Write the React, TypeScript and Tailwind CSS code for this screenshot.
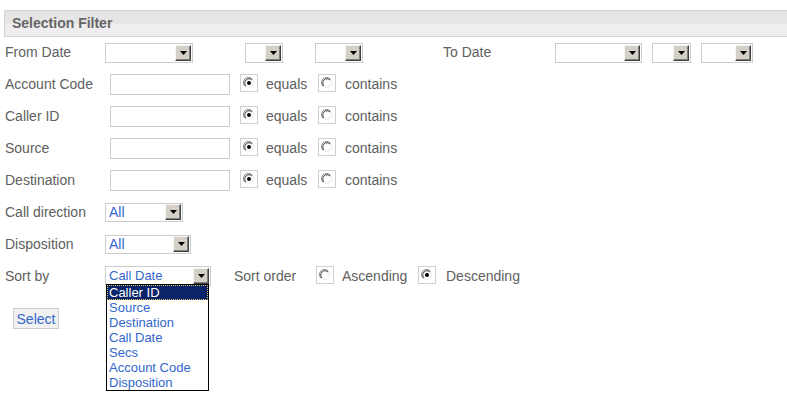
import React from 'react';

const Arrow = () => (
  <div className="ml-auto mr-px flex h-[16px] w-[16px] shrink-0 items-center justify-center border border-t-[#f4f4f4] border-l-[#f4f4f4] border-r-[#404040] border-b-[#404040] bg-[#d4d0c8] shadow-[inset_-1px_-1px_0_#808080]">
    <svg width="7" height="4" viewBox="0 0 7 4">
      <path d="M0 0h7L3.5 4z" fill="#000" />
    </svg>
  </div>
);

const Radio = ({ checked }: { checked?: boolean }) => (
  <span className="flex h-[18px] w-[18px] shrink-0 items-center justify-center border border-[#d0d0d0] bg-white">
    <svg width="12" height="12" viewBox="0 0 12 12">
      <path d="M9.5 2.5A5 5 0 1 0 2.5 9.5" fill="none" stroke="#808080" strokeWidth="1" />
      <path d="M9 3A4 4 0 1 0 3 9" fill="none" stroke="#404040" strokeWidth="1" />
      <path d="M2.5 9.5A5 5 0 0 0 9.5 2.5" fill="none" stroke="#e8e8e8" strokeWidth="1" />
      {checked && <circle cx="6" cy="6" r="2" fill="#000" />}
    </svg>
  </span>
);

const textRows = ['Account Code', 'Caller ID', 'Source', 'Destination'];
const sortOptions = ['Caller ID', 'Source', 'Destination', 'Call Date', 'Secs', 'Account Code', 'Disposition'];

export default function App() {
  return (
    <div className="h-[399px] w-[787px] bg-white pt-[10px] text-[14px] text-[#606060] font-['Liberation_Sans',Arial,sans-serif]">
      <div className="ml-[4px] flex h-[27px] items-center border-y border-l border-[#d2d2d2] bg-[linear-gradient(#e5e5e5_50%,#efedef_50%)] pl-[7px] font-bold text-[#666]">
        Selection Filter
      </div>

      <div className="pl-[5px]">
        {/* From / To date */}
        <div className="flex h-[31px] items-center">
          <span className="w-[100px]">From Date</span>
          <div className="flex h-[20px] w-[88px] items-center border border-[#cccccc] bg-white"><Arrow /></div>
          <div className="ml-[52px] flex h-[20px] w-[38px] items-center border border-[#cccccc] bg-white"><Arrow /></div>
          <div className="ml-[32px] flex h-[20px] w-[48px] items-center border border-[#cccccc] bg-white"><Arrow /></div>
          <span className="ml-[80px] w-[112px]">To Date</span>
          <div className="flex h-[20px] w-[87px] items-center border border-[#cccccc] bg-white"><Arrow /></div>
          <div className="ml-[10px] flex h-[20px] w-[39px] items-center border border-[#cccccc] bg-white"><Arrow /></div>
          <div className="ml-[10px] flex h-[20px] w-[52px] items-center border border-[#cccccc] bg-white"><Arrow /></div>
        </div>

        {textRows.map((label) => (
          <div key={label} className="flex h-[32px] items-center">
            <span className="w-[105px]">{label}</span>
            <div className="h-[21px] w-[120px] border border-[#cccccc] bg-white" />
            <span className="ml-[10px] -mt-[3px]"><Radio checked /></span>
            <span className="ml-[8px] w-[52px]">equals</span>
            <span className="-mt-[3px]"><Radio /></span>
            <span className="ml-[9px]">contains</span>
          </div>
        ))}

        <div className="flex h-[32px] items-center">
          <span className="w-[100px]">Call direction</span>
          <div className="flex h-[19px] w-[78px] items-center border border-[#cccccc] bg-white pl-[3px] text-[#3366cc]">
            All<Arrow />
          </div>
        </div>

        <div className="flex h-[32px] items-center">
          <span className="w-[100px]">Disposition</span>
          <div className="flex h-[19px] w-[86px] items-center border border-[#cccccc] bg-white pl-[3px] text-[#3366cc]">
            All<Arrow />
          </div>
        </div>

        <div className="flex h-[32px] items-center">
          <span className="w-[100px]">Sort by</span>
          <div className="relative flex h-[20px] w-[106px] items-center border border-[#cccccc] bg-white pl-[3px] text-[13px] text-[#3366cc]">
            Call Date<Arrow />
            <div className="absolute left-0 top-[17px] z-10 w-[103px] border border-black bg-white text-[13px] leading-[15px] text-[#3366cc]">
              {sortOptions.map((o, i) =>
                i === 0 ? (
                  <div key={o} className="border border-dotted border-[#e8c860] bg-[#0a246a] pl-px leading-[13px] text-white">{o}</div>
                ) : (
                  <div key={o} className="pl-[2px]">{o}</div>
                )
              )}
            </div>
          </div>
          <span className="ml-[23px] w-[82px]">Sort order</span>
          <span className="-mt-[3px]"><Radio /></span>
          <span className="ml-[8px] w-[76px]">Ascending</span>
          <span className="-mt-[3px]"><Radio checked /></span>
          <span className="ml-[10px]">Descending</span>
        </div>

        <button className="ml-[8px] mt-[16px] h-[21px] w-[46px] border border-[#cccccc] bg-[#f2f2f2] text-[14px] text-[#3366cc]">
          Select
        </button>
      </div>
    </div>
  );
}
